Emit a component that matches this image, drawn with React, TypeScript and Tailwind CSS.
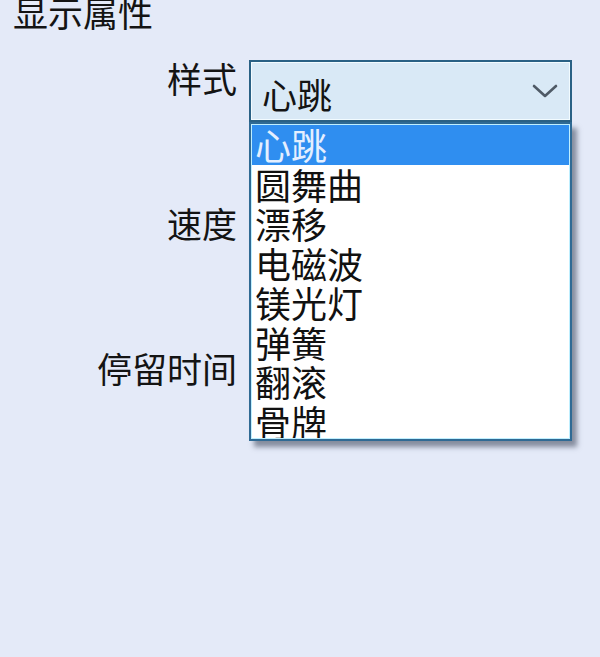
import React from "react";

const items = ["心跳", "圆舞曲", "漂移", "电磁波", "镁光灯", "弹簧", "翻滚", "骨牌"];

export default function App() {
  return (
    <div
      className="w-[600px] h-[657px] bg-[#e4eaf8] overflow-hidden text-[#141414]"
      style={{ fontFamily: '"Noto Sans CJK SC", "Noto Sans", sans-serif' }}
    >
      <div className="-mt-[6px] h-[66px] pl-[13px] text-[35px] leading-[35px]">显示属性</div>

      <div className="flex h-[145px]">
        <div className="w-[237px] text-right text-[35px] leading-[35px]">样式</div>
        <div className="relative ml-[12px] w-[323px] h-[62px]">
          <div className="flex h-full items-center justify-between border-2 border-[#2a6185] bg-[#d9e9f6] pl-[11px] pr-[12px] pt-[4px] shadow-[inset_0_0_0_1px_#f2fbff]">
            <span className="text-[35px] leading-[35px]">心跳</span>
            <svg width="26" height="14" viewBox="0 0 26 14" className="-mt-[4px]">
              <path d="M2 2 L13 12 L24 2" fill="none" stroke="#4f5a66" strokeWidth="2.6" strokeLinecap="round" strokeLinejoin="round" />
            </svg>
          </div>
          <div className="absolute left-0 top-full z-10 h-[319px] w-[323px] overflow-hidden border-2 border-[#2f6a94] bg-white shadow-[5px_6px_5px_rgba(40,50,70,0.5)]">
            <div className="h-full w-full overflow-hidden border border-[#bfefff]">
              {items.map((t, i) => (
                <div
                  key={t}
                  className={
                    i === 0
                      ? "h-[39.5px] bg-[#2f8ef0] pl-[3px] text-[36px] leading-[39px] text-[#e4efff]"
                      : "h-[39.5px] pl-[3px] text-[36px] leading-[39px] text-[#111]"
                  }
                >
                  {t}
                </div>
              ))}
            </div>
          </div>
        </div>
      </div>

      <div className="flex h-[145px]">
        <div className="w-[237px] text-right text-[35px] leading-[35px]">速度</div>
      </div>

      <div className="flex h-[145px]">
        <div className="w-[237px] text-right text-[35px] leading-[35px]">停留时间</div>
      </div>
    </div>
  );
}
